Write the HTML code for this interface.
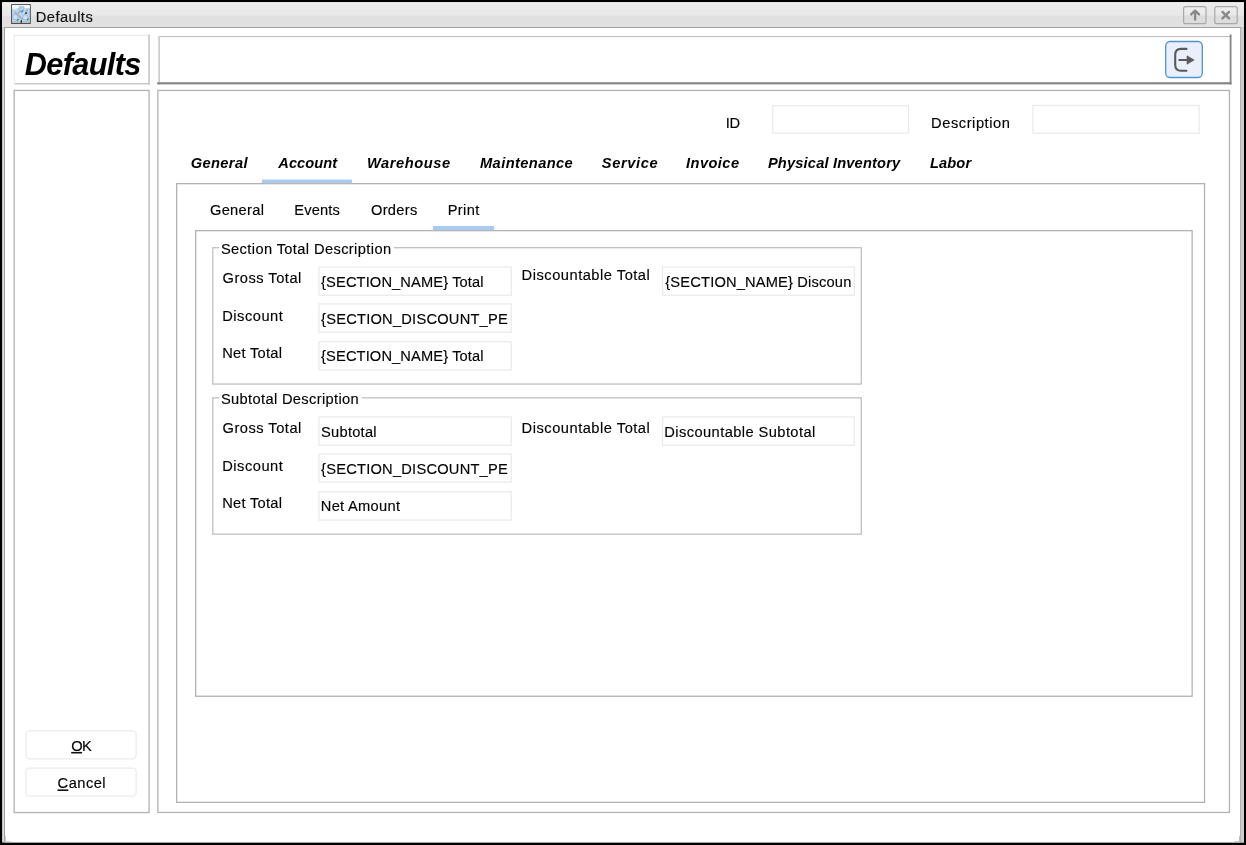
<!DOCTYPE html>
<html><head><meta charset="utf-8"><title>Defaults</title>
<style>
*{box-sizing:border-box;margin:0;padding:0}
html,body{width:1246px;height:845px;overflow:hidden;background:#fff}
body{font-family:"Liberation Sans",sans-serif;font-size:14.67px;color:#000;position:relative}
#chrome{position:absolute;left:0;top:0;width:1246px;height:845px}
.t{position:absolute;white-space:nowrap;line-height:1;-webkit-text-stroke:0.15px #000}
#txt{position:absolute;left:0;top:0;width:1246px;height:845px;will-change:transform;opacity:0.999}
.fld{position:absolute}
.btn{position:absolute}
u{text-decoration:none}
</style></head><body>
<svg id="chrome" width="1246" height="845" viewBox="0 0 1246 845">
<rect x="0.00" y="0.00" width="1246.00" height="845.00" fill="#000"/>
<rect x="2.10" y="2.20" width="1241.80" height="840.30" fill="#dcdcdc"/>
<defs><linearGradient id="tg" x1="0" y1="0" x2="0" y2="1"><stop offset="0" stop-color="#f3f3f3"/><stop offset="0.07" stop-color="#ececec"/><stop offset="0.52" stop-color="#e8e8e8"/><stop offset="0.57" stop-color="#e0e0e0"/><stop offset="1" stop-color="#e1e1e1"/></linearGradient><linearGradient id="bg" x1="0" y1="0" x2="0" y2="1"><stop offset="0" stop-color="#eeeeee"/><stop offset="0.5" stop-color="#e9e9e9"/><stop offset="0.54" stop-color="#dcdcdc"/><stop offset="1" stop-color="#dedede"/></linearGradient></defs>
<rect x="2.1" y="2.2" width="1241.8" height="25" fill="url(#tg)"/>
<rect x="4.00" y="27.00" width="1237.20" height="815.50" fill="#9fa0a2"/>
<rect x="5.00" y="28.00" width="1235.20" height="814.20" fill="#fff"/>
<rect x="1241.20" y="27.00" width="2.80" height="815.50" fill="#cdcdcd"/>
<rect x="4.60" y="835.80" width="1.00" height="6.40" fill="#a8b0bc"/>
<rect x="4.60" y="841.40" width="6.40" height="1.00" fill="#b4bac4"/>
<rect x="1239.20" y="835.80" width="1.00" height="6.40" fill="#a8b0bc"/>
<rect x="1234.00" y="841.40" width="6.20" height="1.00" fill="#b4bac4"/>
<rect x="1183.6" y="6.6" width="22.400000000000002" height="17.1" rx="2" fill="url(#bg)" stroke="#a9a9a9" stroke-width="1.2"/>
<rect x="1214.8" y="6.6" width="22.400000000000002" height="17.1" rx="2" fill="url(#bg)" stroke="#a9a9a9" stroke-width="1.2"/>
<path d="M1195.1 19.6 V10.6 M1191.2 14.4 L1195.1 10.5 L1199 14.4" fill="none" stroke="#888" stroke-width="2.4" stroke-linecap="round" stroke-linejoin="round"/>
<path d="M1222.5 11.9 L1229 18.4 M1229 11.9 L1222.5 18.4" fill="none" stroke="#8a8a8a" stroke-width="2.4" stroke-linecap="round"/>
<rect x="13.70" y="34.80" width="136.20" height="1.10" fill="#e9e9e9"/>
<rect x="13.70" y="34.80" width="1.10" height="49.60" fill="#ececec"/>
<rect x="148.20" y="34.40" width="1.70" height="50.00" fill="#cacaca"/>
<rect x="14.80" y="83.00" width="135.10" height="1.40" fill="#c6c6c6"/>
<rect x="158.30" y="36.00" width="1073.20" height="1.10" fill="#bfbfbf"/>
<rect x="158.30" y="36.00" width="1.70" height="48.40" fill="#cdcdcd"/>
<rect x="1229.70" y="34.40" width="1.80" height="50.00" fill="#868686"/>
<rect x="157.20" y="82.20" width="1074.30" height="2.20" fill="#868686"/>
<rect x="14.15" y="90.45" width="134.90" height="722.10" fill="none" stroke="#b2b2b2" stroke-width="1.3" />
<rect x="157.85" y="90.45" width="1071.60" height="722.00" fill="none" stroke="#b2b2b2" stroke-width="1.3" />
<rect x="176.65" y="183.65" width="1027.90" height="618.70" fill="none" stroke="#b2b2b2" stroke-width="1.3" />
<rect x="195.65" y="230.65" width="996.50" height="465.60" fill="none" stroke="#b2b2b2" stroke-width="1.3" />
<rect x="262.00" y="179.50" width="89.90" height="3.70" fill="#a9cbf0"/>
<rect x="433.00" y="226.00" width="61.20" height="4.10" fill="#a9cbf0"/>
<rect x="212.85" y="247.75" width="648.40" height="136.30" fill="none" stroke="#b4b4b4" stroke-width="1.1" />
<rect x="219.00" y="246.10" width="174.80" height="3.50" fill="#fff"/>
<rect x="212.85" y="397.85" width="648.40" height="136.30" fill="none" stroke="#b4b4b4" stroke-width="1.1" />
<rect x="219.00" y="396.20" width="142.60" height="3.50" fill="#fff"/>
<rect x="1165.7" y="41.5" width="36.6" height="36" rx="4.5" fill="#e9f0fb" stroke="#4f92d8" stroke-width="1.3"/>
<path d="M1186.5 48.9 H1181 Q1175.2 48.9 1175.2 55 V64.8 Q1175.2 70.8 1181 70.8 H1186.5" fill="none" stroke="#5a5a5a" stroke-width="2.1" stroke-linecap="round"/>
<path d="M1179.2 60 H1188" stroke="#5a5a5a" stroke-width="1.9" stroke-linecap="round" fill="none"/>
<path d="M1187 55.8 L1194.2 60 L1187 64.2 Z" fill="#5a5a5a" stroke="#5a5a5a" stroke-width="0.6" stroke-linejoin="round"/>
<g><rect x="11.6" y="4.6" width="18.7" height="18.9" fill="#b6d7f6" stroke="#474747" stroke-width="0.95"/><rect x="12.1" y="5.1" width="17.7" height="3" fill="#fdfcf6"/><rect x="12.2" y="7.8" width="4.5" height="1.6" fill="#f1f0e2"/><rect x="18.6" y="6.2" width="6" height="3" fill="#b0d4f6"/><rect x="12.2" y="21.2" width="17.5" height="1.8" fill="#b9bcc0"/><path d="M14.5 11.8 L23 20 M27.5 9 L24.6 15.5 M18 13.5 L21 10" stroke="#aeb1b4" stroke-width="1.8" fill="none"/><circle cx="15.3" cy="17" r="2.6" fill="#c9e3fb" stroke="#aab4bd" stroke-width="0.9"/><circle cx="25.3" cy="17.3" r="2.6" fill="#c9e3fb" stroke="#aab4bd" stroke-width="0.9"/><circle cx="21.4" cy="8.8" r="2.3" fill="#b0d4f6" stroke="#a9b6c2" stroke-width="0.8"/><path d="M21 12.3 l2.2 -1.8 M16.8 20.8 l1.8 -1.7 M26.8 20.4 l2 -1.8" stroke="#1a9898" stroke-width="1.25" fill="none"/><rect x="25.3" y="12.5" width="1.8" height="1.3" fill="#1c1c1c"/><rect x="20.6" y="20.3" width="1.4" height="2.4" fill="#2a2a2a"/></g>
<g fill="#fff" stroke="#e9ebee" stroke-width="1.3">
<rect x="772.75" y="105.65" width="135.60" height="27.50"/>
<rect x="1032.95" y="105.45" width="166.20" height="27.80"/>
<rect x="318.95" y="266.95" width="192.30" height="28.30"/>
<rect x="662.55" y="266.95" width="191.80" height="28.30"/>
<rect x="318.95" y="303.95" width="192.30" height="28.20"/>
<rect x="318.95" y="341.75" width="192.30" height="28.30"/>
<rect x="318.95" y="416.95" width="192.30" height="28.30"/>
<rect x="662.55" y="416.95" width="191.80" height="28.30"/>
<rect x="318.95" y="453.95" width="192.30" height="28.20"/>
<rect x="318.95" y="491.75" width="192.30" height="28.30"/>
<rect x="25.95" y="730.95" width="110.20" height="27.90" rx="3.5"/>
<rect x="25.95" y="768.15" width="110.20" height="27.90" rx="3.5"/>
</g>
<rect x="71.20" y="751.90" width="10.90" height="1.60" fill="#111"/>
<rect x="57.50" y="789.40" width="10.80" height="1.60" fill="#111"/>
</svg>
<div id="txt">
<div class="t" style="left:35.80px;top:9.56px;font-size:14.67px;letter-spacing:0.452px;color:#111;-webkit-text-stroke:0.15px #111">Defaults</div>
<div class="t" style="left:24.80px;top:48.76px;font-size:30.67px;letter-spacing:-0.643px;font-weight:bold;font-style:italic;color:#000;-webkit-text-stroke:0">Defaults</div>
<div class="t" style="left:725.70px;top:115.76px;font-size:14.67px;letter-spacing:-0.272px;">ID</div>
<div class="t" style="left:931.10px;top:115.76px;font-size:14.67px;letter-spacing:0.544px;">Description</div>
<div class="t" style="left:190.80px;top:156.36px;font-size:14.67px;letter-spacing:0.348px;font-weight:bold;font-style:italic;color:#000;-webkit-text-stroke:0">General</div>
<div class="t" style="left:278.30px;top:156.36px;font-size:14.67px;letter-spacing:0.026px;font-weight:bold;font-style:italic;color:#000;-webkit-text-stroke:0">Account</div>
<div class="t" style="left:366.90px;top:156.36px;font-size:14.67px;letter-spacing:0.577px;font-weight:bold;font-style:italic;color:#000;-webkit-text-stroke:0">Warehouse</div>
<div class="t" style="left:480.00px;top:156.36px;font-size:14.67px;letter-spacing:0.398px;font-weight:bold;font-style:italic;color:#000;-webkit-text-stroke:0">Maintenance</div>
<div class="t" style="left:601.80px;top:156.36px;font-size:14.67px;letter-spacing:0.616px;font-weight:bold;font-style:italic;color:#000;-webkit-text-stroke:0">Service</div>
<div class="t" style="left:686.10px;top:156.36px;font-size:14.67px;letter-spacing:0.408px;font-weight:bold;font-style:italic;color:#000;-webkit-text-stroke:0">Invoice</div>
<div class="t" style="left:767.90px;top:156.36px;font-size:14.67px;letter-spacing:0.167px;font-weight:bold;font-style:italic;color:#000;-webkit-text-stroke:0">Physical Inventory</div>
<div class="t" style="left:930.10px;top:156.36px;font-size:14.67px;letter-spacing:0.073px;font-weight:bold;font-style:italic;color:#000;-webkit-text-stroke:0">Labor</div>
<div class="t" style="left:209.90px;top:202.76px;font-size:14.67px;letter-spacing:0.336px;">General</div>
<div class="t" style="left:294.20px;top:202.76px;font-size:14.67px;letter-spacing:0.184px;">Events</div>
<div class="t" style="left:370.90px;top:202.76px;font-size:14.67px;letter-spacing:0.347px;">Orders</div>
<div class="t" style="left:447.70px;top:202.76px;font-size:14.67px;letter-spacing:0.384px;">Print</div>
<div class="t" style="left:220.90px;top:242.16px;font-size:14.67px;letter-spacing:0.381px;">Section Total Description</div>
<div class="t" style="left:222.50px;top:270.87px;font-size:14.67px;letter-spacing:0.494px;">Gross Total</div>
<div class="t" style="left:521.60px;top:267.56px;font-size:14.67px;letter-spacing:0.512px;">Discountable Total</div>
<div class="t" style="left:222.20px;top:308.77px;font-size:14.67px;letter-spacing:0.521px;">Discount</div>
<div class="t" style="left:222.20px;top:345.97px;font-size:14.67px;letter-spacing:0.277px;">Net Total</div>
<div class="t" style="left:220.90px;top:392.17px;font-size:14.67px;letter-spacing:0.352px;">Subtotal Description</div>
<div class="t" style="left:222.50px;top:420.87px;font-size:14.67px;letter-spacing:0.494px;">Gross Total</div>
<div class="t" style="left:521.60px;top:421.17px;font-size:14.67px;letter-spacing:0.512px;">Discountable Total</div>
<div class="t" style="left:222.20px;top:458.77px;font-size:14.67px;letter-spacing:0.521px;">Discount</div>
<div class="t" style="left:222.20px;top:495.97px;font-size:14.67px;letter-spacing:0.277px;">Net Total</div>
<div class="fld" style="left:772.10px;top:105.00px;width:136.90px;height:28.80px"></div>
<div class="fld" style="left:1032.30px;top:104.80px;width:167.50px;height:29.10px"></div>
<div class="fld" style="left:318.30px;top:266.30px;width:193.60px;height:29.60px"></div>
<div class="t" style="left:321.10px;top:274.67px;font-size:14.67px;letter-spacing:0.121px;">{SECTION_NAME} Total</div>
<div class="fld" style="left:661.90px;top:266.30px;width:193.10px;height:29.60px"></div>
<div class="t" style="left:665.30px;top:274.67px;font-size:14.67px;letter-spacing:0.171px;">{SECTION_NAME} Discoun</div>
<div class="fld" style="left:318.30px;top:303.30px;width:193.60px;height:29.50px"></div>
<div class="t" style="left:321.10px;top:311.67px;font-size:14.67px;letter-spacing:0.223px;">{SECTION_DISCOUNT_PE</div>
<div class="fld" style="left:318.30px;top:341.10px;width:193.60px;height:29.60px"></div>
<div class="t" style="left:321.10px;top:349.47px;font-size:14.67px;letter-spacing:0.121px;">{SECTION_NAME} Total</div>
<div class="fld" style="left:318.30px;top:416.30px;width:193.60px;height:29.60px"></div>
<div class="t" style="left:321.10px;top:424.67px;font-size:14.67px;letter-spacing:0.239px;">Subtotal</div>
<div class="fld" style="left:661.90px;top:416.30px;width:193.10px;height:29.60px"></div>
<div class="t" style="left:664.30px;top:424.67px;font-size:14.67px;letter-spacing:0.419px;">Discountable Subtotal</div>
<div class="fld" style="left:318.30px;top:453.30px;width:193.60px;height:29.50px"></div>
<div class="t" style="left:321.10px;top:461.67px;font-size:14.67px;letter-spacing:0.223px;">{SECTION_DISCOUNT_PE</div>
<div class="fld" style="left:318.30px;top:491.10px;width:193.60px;height:29.60px"></div>
<div class="t" style="left:320.80px;top:499.47px;font-size:14.67px;letter-spacing:0.287px;">Net Amount</div>
<div class="btn" style="left:25.30px;top:730.30px;width:111.50px;height:29.20px"></div>
<div class="t" style="left:71.30px;top:738.66px;font-size:14.67px;letter-spacing:-0.600px;"><u>O</u>K</div>
<div class="btn" style="left:25.30px;top:767.50px;width:111.50px;height:29.20px"></div>
<div class="t" style="left:57.60px;top:776.06px;font-size:14.67px;letter-spacing:0.467px;"><u>C</u>ancel</div>
</div>
</body></html>
